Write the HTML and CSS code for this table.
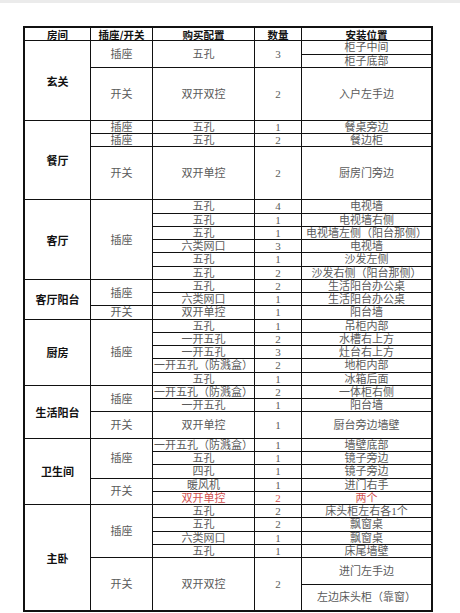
FILE: index.html
```html
<!DOCTYPE html>
<html lang="zh-CN">
<head>
<meta charset="utf-8">
<title>插座开关配置表</title>
<link rel="stylesheet" href="styles.css">
</head>
<body>
<div class="strip"></div>
<div class="sheet">
  <div class="c h">房间</div><div class="c h">插座/开关</div><div class="c h">购买配置</div><div class="c h">数量</div><div class="c h">安装位置</div>

  <div class="c room s6">玄关</div>
  <div class="c s2">插座</div><div class="c s2">五孔</div><div class="c s2">3</div><div class="c">柜子中间</div>
  <div class="c">柜子底部</div>
  <div class="c s4">开关</div><div class="c s4">双开双控</div><div class="c s4">2</div><div class="c s4">入户左手边</div>

  <div class="c room s6">餐厅</div>
  <div class="c">插座</div><div class="c">五孔</div><div class="c">1</div><div class="c">餐桌旁边</div>
  <div class="c">插座</div><div class="c">五孔</div><div class="c">2</div><div class="c">餐边柜</div>
  <div class="c s4">开关</div><div class="c s4">双开单控</div><div class="c s4">2</div><div class="c s4">厨房门旁边</div>

  <div class="c room s6">客厅</div>
  <div class="c s6">插座</div><div class="c">五孔</div><div class="c">4</div><div class="c">电视墙</div>
  <div class="c">五孔</div><div class="c">1</div><div class="c">电视墙右侧</div>
  <div class="c">五孔</div><div class="c">1</div><div class="c">电视墙左侧（阳台那侧）</div>
  <div class="c">六类网口</div><div class="c">3</div><div class="c">电视墙</div>
  <div class="c">五孔</div><div class="c">1</div><div class="c">沙发左侧</div>
  <div class="c">五孔</div><div class="c">2</div><div class="c">沙发右侧（阳台那侧）</div>

  <div class="c room s3">客厅阳台</div>
  <div class="c s2">插座</div><div class="c">五孔</div><div class="c">2</div><div class="c">生活阳台办公桌</div>
  <div class="c">六类网口</div><div class="c">1</div><div class="c">生活阳台办公桌</div>
  <div class="c">开关</div><div class="c">双开单控</div><div class="c">1</div><div class="c">阳台墙</div>

  <div class="c room s5">厨房</div>
  <div class="c s5">插座</div><div class="c">五孔</div><div class="c">1</div><div class="c">吊柜内部</div>
  <div class="c">一开五孔</div><div class="c">2</div><div class="c">水槽右上方</div>
  <div class="c">一开五孔</div><div class="c">3</div><div class="c">灶台右上方</div>
  <div class="c">一开五孔（防溅盒）</div><div class="c">2</div><div class="c">地柜内部</div>
  <div class="c">五孔</div><div class="c">1</div><div class="c">冰箱后面</div>

  <div class="c room s4">生活阳台</div>
  <div class="c s2">插座</div><div class="c">一开五孔（防溅盒）</div><div class="c">2</div><div class="c">一体柜右侧</div>
  <div class="c">一开五孔</div><div class="c">1</div><div class="c">阳台墙</div>
  <div class="c s2">开关</div><div class="c s2">双开单控</div><div class="c s2">1</div><div class="c s2">厨台旁边墙壁</div>

  <div class="c room s5">卫生间</div>
  <div class="c s3">插座</div><div class="c">一开五孔（防溅盒）</div><div class="c">1</div><div class="c">墙壁底部</div>
  <div class="c">五孔</div><div class="c">1</div><div class="c">镜子旁边</div>
  <div class="c">四孔</div><div class="c">1</div><div class="c">镜子旁边</div>
  <div class="c s2">开关</div><div class="c">暖风机</div><div class="c">1</div><div class="c">进门右手</div>
  <div class="c red">双开单控</div><div class="c red">2</div><div class="c red">两个</div>

  <div class="c room s8">主卧</div>
  <div class="c s4">插座</div><div class="c">五孔</div><div class="c">2</div><div class="c">床头柜左右各1个</div>
  <div class="c">五孔</div><div class="c">2</div><div class="c">飘窗桌</div>
  <div class="c">六类网口</div><div class="c">1</div><div class="c">飘窗桌</div>
  <div class="c">五孔</div><div class="c">1</div><div class="c">床尾墙壁</div>
  <div class="c s4">开关</div><div class="c s4">双开双控</div><div class="c s4">2</div><div class="c s2">进门左手边</div>
  <div class="c s2">左边床头柜（靠窗）</div>
</div>
</body>
</html>
```

FILE: styles.css
```css
html, body {
  margin: 0;
  padding: 0;
  background: #fff;
}

.strip {
  height: 3px;
  background: #ebebeb;
}

.sheet {
  display: grid;
  grid-template-columns: 65px 61px 101px 46px 129px;
  grid-auto-rows: 12.25px;
  gap: 1px;
  background: #111;
  border: 2px solid #111;
  width: max-content;
  margin: 23px 0 0 23px;
}

.c {
  background: #fff;
  display: flex;
  align-items: center;
  justify-content: center;
  padding-top: 1px;
  font-family: "Liberation Serif", "Noto Sans CJK SC", serif;
  font-size: 11px;
  line-height: 11px;
  color: #5a5a5a;
  white-space: nowrap;
}

.h {
  font-family: "Noto Sans CJK SC", sans-serif;
  font-weight: 700;
  font-size: 10.5px;
  color: #111;
}

.room {
  font-family: "Noto Sans CJK SC", sans-serif;
  font-weight: 700;
  font-size: 11px;
  color: #111;
}

.red {
  color: #d0504f;
}

.s2 { grid-row: span 2; }
.s3 { grid-row: span 3; }
.s4 { grid-row: span 4; }
.s5 { grid-row: span 5; }
.s6 { grid-row: span 6; }
.s8 { grid-row: span 8; }
```
